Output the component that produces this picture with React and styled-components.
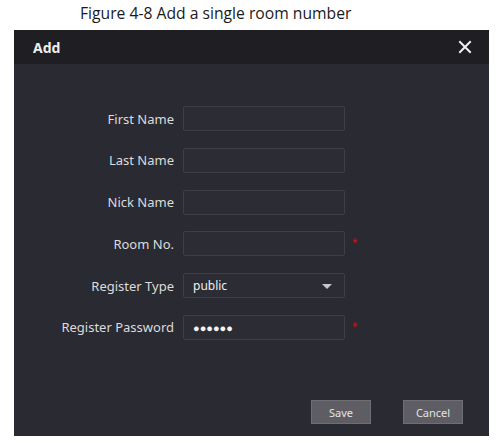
import { Fragment } from "react";
import styled, { createGlobalStyle } from "styled-components";

const GlobalStyle = createGlobalStyle`
  html, body {
    margin: 0;
    padding: 0;
    background: #ffffff;
  }
  body {
    font-family: "Open Sans", "Noto Sans", sans-serif;
  }
`;

const Page = styled.div`
  width: 498px;
  height: 445px;
  display: flex;
  flex-direction: column;
  overflow: hidden;
`;

const Caption = styled.div`
  height: 30px;
  padding-left: 80px;
  font-size: 15.7px;
  line-height: 26px;
  color: #1a1a1a;
`;

const Dialog = styled.div`
  margin-left: 14px;
  width: 475px;
  height: 406px;
  background: #2a2a32;
  display: flex;
  flex-direction: column;
`;

const Header = styled.div`
  height: 34px;
  background: #1e1e23;
  display: flex;
  align-items: center;
  justify-content: space-between;
  padding: 0 17px 0 19px;
`;

const Title = styled.div`
  font-family: "Noto Sans", sans-serif;
  font-weight: 700;
  font-size: 14px;
  color: #eeeeee;
`;

const Close = styled.button`
  background: none;
  border: 0;
  padding: 0;
  width: 14px;
  height: 14px;
  display: flex;
`;

const Form = styled.div`
  display: grid;
  grid-template-columns: 160px 162px 20px;
  column-gap: 9px;
  row-gap: 16.8px;
  align-items: center;
  padding: 42px 0 0 0;
`;

const Label = styled.div`
  font-family: "Noto Sans", sans-serif;
  font-size: 13px;
  color: #dcdcdc;
  text-align: right;
`;

const Field = styled.div`
  position: relative;
  height: 25px;
  box-sizing: border-box;
  border: 1px solid #3e3e46;
  border-radius: 2px;
  background: #2c2c35;
  display: flex;
  align-items: center;
  padding-left: 9px;
  font-family: "Noto Sans", sans-serif;
  font-size: 12px;
  color: #f0f0f0;
`;

const Dots = styled.span`
  font-size: 11px;
  color: #f4f4f4;
`;

const Arrow = styled.span`
  position: absolute;
  right: 12px;
  top: 10px;
  width: 0;
  height: 0;
  border-left: 5px solid transparent;
  border-right: 5px solid transparent;
  border-top: 5px solid #c8c8cc;
`;

const Required = styled.span`
  color: ${(p) => (p.$show ? "#d8101e" : "transparent")};
  font-size: 10px;
  align-self: start;
  margin-top: 4px;
  margin-left: -2px;
`;

const Footer = styled.div`
  margin-top: auto;
  display: flex;
  justify-content: flex-end;
  gap: 32px;
  padding: 0 26px 12px 0;
`;

const Button = styled.button`
  width: 60px;
  height: 24px;
  background: #5d5d63;
  border: 1px solid #6e6e74;
  color: #e4e4e4;
  font-family: "Noto Sans", sans-serif;
  font-size: 11px;
  padding: 0;
`;

const rows = [
  { label: "First Name" },
  { label: "Last Name" },
  { label: "Nick Name" },
  { label: "Room No.", required: true },
  { label: "Register Type", value: "public", select: true },
  { label: "Register Password", password: true, required: true },
];

export default function App() {
  return (
    <Page>
      <GlobalStyle />
      <Caption>Figure 4-8 Add a single room number</Caption>
      <Dialog>
        <Header>
          <Title>Add</Title>
          <Close aria-label="close">
            <svg width="14" height="14" viewBox="0 0 14 14">
              <path d="M2 2 L12 12 M12 2 L2 12" stroke="#f2f2f2" strokeWidth="2" strokeLinecap="square" />
            </svg>
          </Close>
        </Header>
        <Form>
          {rows.map((r) => (
            <Fragment key={r.label}>
              <Label>{r.label}</Label>
              <Field>
                {r.value}
                {r.password && <Dots>●●●●●●</Dots>}
                {r.select && <Arrow />}
              </Field>
              <Required $show={r.required}>*</Required>
            </Fragment>
          ))}
        </Form>
        <Footer>
          <Button>Save</Button>
          <Button>Cancel</Button>
        </Footer>
      </Dialog>
    </Page>
  );
}
